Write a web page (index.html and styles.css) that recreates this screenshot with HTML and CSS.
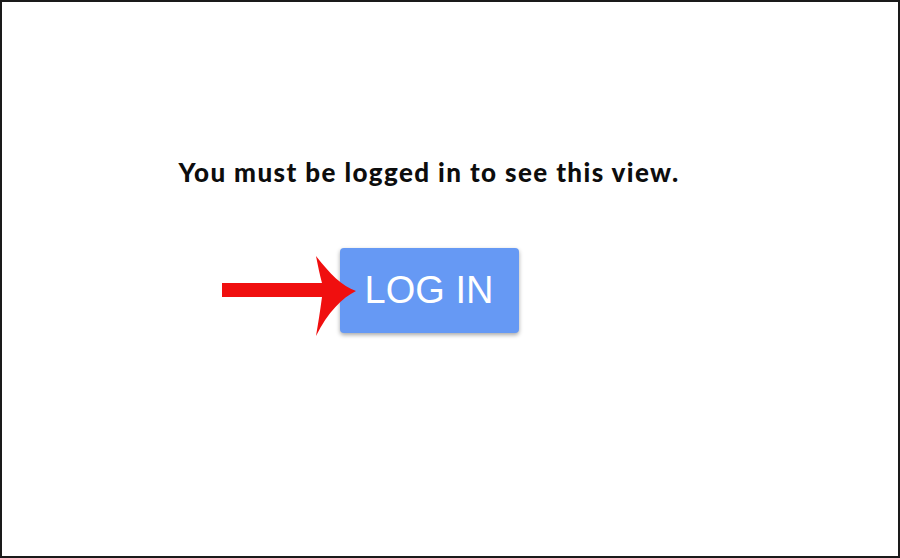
FILE: index.html
```html
<!DOCTYPE html>
<html lang="en">

<head>
    <meta charset="UTF-8">
    <meta name="viewport" content="width=device-width, initial-scale=1.0">
    <title>Log in</title>
    <link rel="stylesheet" href="styles.css">
</head>

<body>
    <div class="frame">
        <div class="view">
            <h2 class="notice">You must be logged in to see this view.</h2>
            <div class="action">
                <svg class="arrow" width="140" height="80" viewBox="0 0 140 80">
                    <path d="M0 27 L100 27 C98 20 96 10 94 0 C108 18 120 30 134 35 C120 42 106 56 94 80 C96 68 98 56 100 41 L0 41 Z" fill="#f00f0f" />
                </svg>
                <button class="login">LOG IN</button>
            </div>
        </div>
    </div>
</body>

</html>
```

FILE: styles.css
```css
body {
    margin: 0;
    font-family: "Lato", "Liberation Sans", sans-serif;
}

.frame {
    box-sizing: border-box;
    width: 900px;
    height: 558px;
    border: 2px solid #1a1a1a;
    background-color: #fff;
}

.view {
    display: flex;
    flex-direction: column;
    align-items: center;
    padding-top: 154px;
    padding-right: 42px;
}

.notice {
    margin: 0;
    font-size: 26px;
    font-weight: 900;
    letter-spacing: 1.4px;
    color: #0d0d0d;
}

.action {
    position: relative;
    margin-top: 60px;
}

.login {
    display: block;
    width: 179px;
    height: 85px;
    border: none;
    border-radius: 4px;
    background-color: #6699f4;
    color: #fff;
    font-family: "Liberation Sans", Arial, sans-serif;
    font-size: 38px;
    box-shadow: 0 2px 4px rgba(0, 0, 0, 0.35);
}

.arrow {
    position: absolute;
    left: -118px;
    top: 8px;
}
```
